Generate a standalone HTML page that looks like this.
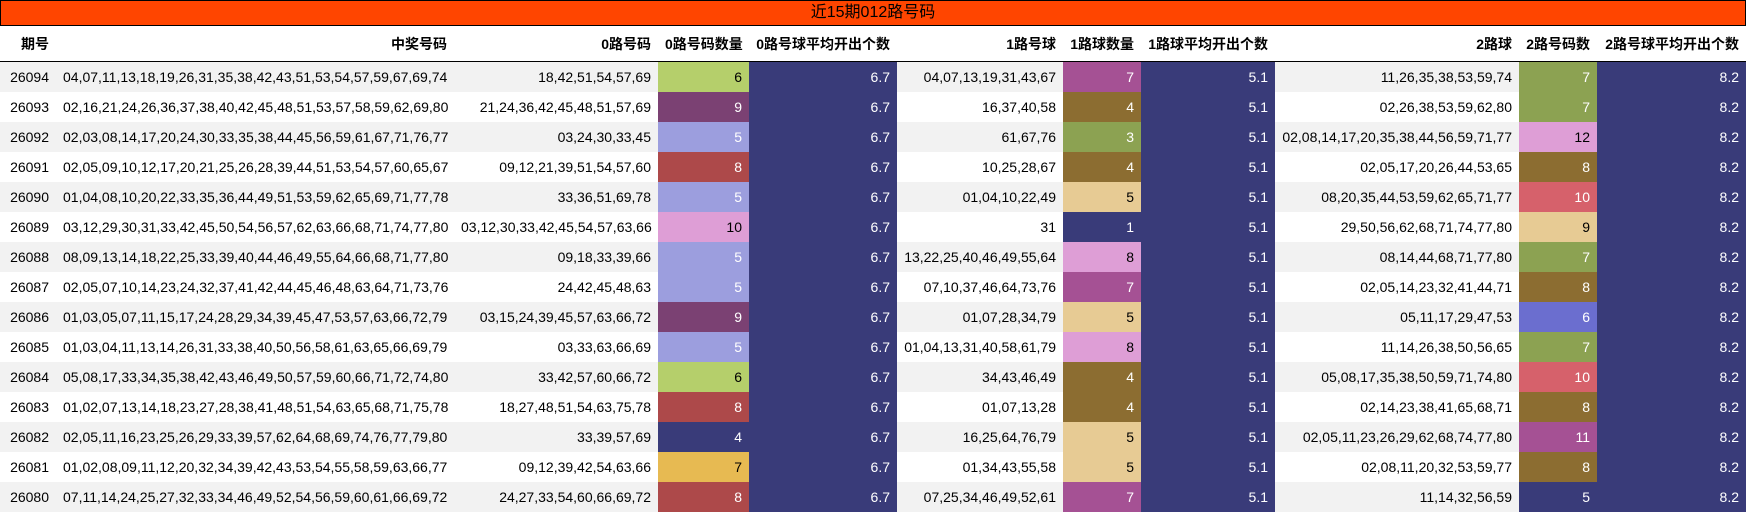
<!DOCTYPE html>
<html><head><meta charset="utf-8"><style>
body{margin:0;background:#fff;font-family:"Liberation Sans","Noto Sans CJK SC",sans-serif;font-size:14px;}
.t{position:absolute;left:0;top:0;width:1744px;height:24px;background:#ff4500;border:1px solid #000;text-align:center;line-height:24px;font-size:16px;color:#000}
table{position:absolute;left:0;top:26px;border-collapse:collapse;table-layout:fixed;width:1746px}
th{height:35px;font-weight:bold;text-align:right;padding:0 7px;border-bottom:1px solid #000;white-space:nowrap;overflow:hidden}
td{height:30px;padding:0 7px;text-align:right;white-space:nowrap;overflow:hidden}
tbody tr:nth-child(odd) td{background:#f2f2f2}
tbody td.a{background:#393b79 !important;color:#fff}
td.w{color:#fff}
</style></head><body>
<div class="t">近15期012路号码</div>
<table>
<colgroup><col style="width:56px"><col style="width:398px"><col style="width:204px"><col style="width:91px"><col style="width:148px"><col style="width:166px"><col style="width:78px"><col style="width:134px"><col style="width:244px"><col style="width:78px"><col style="width:149px"></colgroup>
<thead><tr><th>期号</th><th>中奖号码</th><th>0路号码</th><th>0路号码数量</th><th>0路号球平均开出个数</th><th>1路号球</th><th>1路球数量</th><th>1路球平均开出个数</th><th>2路球</th><th>2路号码数</th><th>2路号球平均开出个数</th></tr></thead>
<tbody>
<tr><td>26094</td><td>04,07,11,13,18,19,26,31,35,38,42,43,51,53,54,57,59,67,69,74</td><td>18,42,51,54,57,69</td><td style="background:#b5cf6b!important">6</td><td class="a">6.7</td><td>04,07,13,19,31,43,67</td><td class="w" style="background:#a55194!important">7</td><td class="a">5.1</td><td>11,26,35,38,53,59,74</td><td class="w" style="background:#8ca252!important">7</td><td class="a">8.2</td></tr>
<tr><td>26093</td><td>02,16,21,24,26,36,37,38,40,42,45,48,51,53,57,58,59,62,69,80</td><td>21,24,36,42,45,48,51,57,69</td><td class="w" style="background:#7b4173">9</td><td class="a">6.7</td><td>16,37,40,58</td><td class="w" style="background:#8c6d31">4</td><td class="a">5.1</td><td>02,26,38,53,59,62,80</td><td class="w" style="background:#8ca252">7</td><td class="a">8.2</td></tr>
<tr><td>26092</td><td>02,03,08,14,17,20,24,30,33,35,38,44,45,56,59,61,67,71,76,77</td><td>03,24,30,33,45</td><td class="w" style="background:#9c9ede!important">5</td><td class="a">6.7</td><td>61,67,76</td><td class="w" style="background:#8ca252!important">3</td><td class="a">5.1</td><td>02,08,14,17,20,35,38,44,56,59,71,77</td><td style="background:#de9ed6!important">12</td><td class="a">8.2</td></tr>
<tr><td>26091</td><td>02,05,09,10,12,17,20,21,25,26,28,39,44,51,53,54,57,60,65,67</td><td>09,12,21,39,51,54,57,60</td><td class="w" style="background:#ad494a">8</td><td class="a">6.7</td><td>10,25,28,67</td><td class="w" style="background:#8c6d31">4</td><td class="a">5.1</td><td>02,05,17,20,26,44,53,65</td><td class="w" style="background:#8c6d31">8</td><td class="a">8.2</td></tr>
<tr><td>26090</td><td>01,04,08,10,20,22,33,35,36,44,49,51,53,59,62,65,69,71,77,78</td><td>33,36,51,69,78</td><td class="w" style="background:#9c9ede!important">5</td><td class="a">6.7</td><td>01,04,10,22,49</td><td style="background:#e7cb94!important">5</td><td class="a">5.1</td><td>08,20,35,44,53,59,62,65,71,77</td><td class="w" style="background:#d6616b!important">10</td><td class="a">8.2</td></tr>
<tr><td>26089</td><td>03,12,29,30,31,33,42,45,50,54,56,57,62,63,66,68,71,74,77,80</td><td>03,12,30,33,42,45,54,57,63,66</td><td style="background:#de9ed6">10</td><td class="a">6.7</td><td>31</td><td class="w" style="background:#393b79">1</td><td class="a">5.1</td><td>29,50,56,62,68,71,74,77,80</td><td style="background:#e7cb94">9</td><td class="a">8.2</td></tr>
<tr><td>26088</td><td>08,09,13,14,18,22,25,33,39,40,44,46,49,55,64,66,68,71,77,80</td><td>09,18,33,39,66</td><td class="w" style="background:#9c9ede!important">5</td><td class="a">6.7</td><td>13,22,25,40,46,49,55,64</td><td style="background:#de9ed6!important">8</td><td class="a">5.1</td><td>08,14,44,68,71,77,80</td><td class="w" style="background:#8ca252!important">7</td><td class="a">8.2</td></tr>
<tr><td>26087</td><td>02,05,07,10,14,23,24,32,37,41,42,44,45,46,48,63,64,71,73,76</td><td>24,42,45,48,63</td><td class="w" style="background:#9c9ede">5</td><td class="a">6.7</td><td>07,10,37,46,64,73,76</td><td class="w" style="background:#a55194">7</td><td class="a">5.1</td><td>02,05,14,23,32,41,44,71</td><td class="w" style="background:#8c6d31">8</td><td class="a">8.2</td></tr>
<tr><td>26086</td><td>01,03,05,07,11,15,17,24,28,29,34,39,45,47,53,57,63,66,72,79</td><td>03,15,24,39,45,57,63,66,72</td><td class="w" style="background:#7b4173!important">9</td><td class="a">6.7</td><td>01,07,28,34,79</td><td style="background:#e7cb94!important">5</td><td class="a">5.1</td><td>05,11,17,29,47,53</td><td class="w" style="background:#6b6ecf!important">6</td><td class="a">8.2</td></tr>
<tr><td>26085</td><td>01,03,04,11,13,14,26,31,33,38,40,50,56,58,61,63,65,66,69,79</td><td>03,33,63,66,69</td><td class="w" style="background:#9c9ede">5</td><td class="a">6.7</td><td>01,04,13,31,40,58,61,79</td><td style="background:#de9ed6">8</td><td class="a">5.1</td><td>11,14,26,38,50,56,65</td><td class="w" style="background:#8ca252">7</td><td class="a">8.2</td></tr>
<tr><td>26084</td><td>05,08,17,33,34,35,38,42,43,46,49,50,57,59,60,66,71,72,74,80</td><td>33,42,57,60,66,72</td><td style="background:#b5cf6b!important">6</td><td class="a">6.7</td><td>34,43,46,49</td><td class="w" style="background:#8c6d31!important">4</td><td class="a">5.1</td><td>05,08,17,35,38,50,59,71,74,80</td><td class="w" style="background:#d6616b!important">10</td><td class="a">8.2</td></tr>
<tr><td>26083</td><td>01,02,07,13,14,18,23,27,28,38,41,48,51,54,63,65,68,71,75,78</td><td>18,27,48,51,54,63,75,78</td><td class="w" style="background:#ad494a">8</td><td class="a">6.7</td><td>01,07,13,28</td><td class="w" style="background:#8c6d31">4</td><td class="a">5.1</td><td>02,14,23,38,41,65,68,71</td><td class="w" style="background:#8c6d31">8</td><td class="a">8.2</td></tr>
<tr><td>26082</td><td>02,05,11,16,23,25,26,29,33,39,57,62,64,68,69,74,76,77,79,80</td><td>33,39,57,69</td><td class="w" style="background:#393b79!important">4</td><td class="a">6.7</td><td>16,25,64,76,79</td><td style="background:#e7cb94!important">5</td><td class="a">5.1</td><td>02,05,11,23,26,29,62,68,74,77,80</td><td class="w" style="background:#a55194!important">11</td><td class="a">8.2</td></tr>
<tr><td>26081</td><td>01,02,08,09,11,12,20,32,34,39,42,43,53,54,55,58,59,63,66,77</td><td>09,12,39,42,54,63,66</td><td style="background:#e7ba52">7</td><td class="a">6.7</td><td>01,34,43,55,58</td><td style="background:#e7cb94">5</td><td class="a">5.1</td><td>02,08,11,20,32,53,59,77</td><td class="w" style="background:#8c6d31">8</td><td class="a">8.2</td></tr>
<tr><td>26080</td><td>07,11,14,24,25,27,32,33,34,46,49,52,54,56,59,60,61,66,69,72</td><td>24,27,33,54,60,66,69,72</td><td class="w" style="background:#ad494a!important">8</td><td class="a">6.7</td><td>07,25,34,46,49,52,61</td><td class="w" style="background:#a55194!important">7</td><td class="a">5.1</td><td>11,14,32,56,59</td><td class="w" style="background:#393b79!important">5</td><td class="a">8.2</td></tr>
</tbody></table>
</body></html>
